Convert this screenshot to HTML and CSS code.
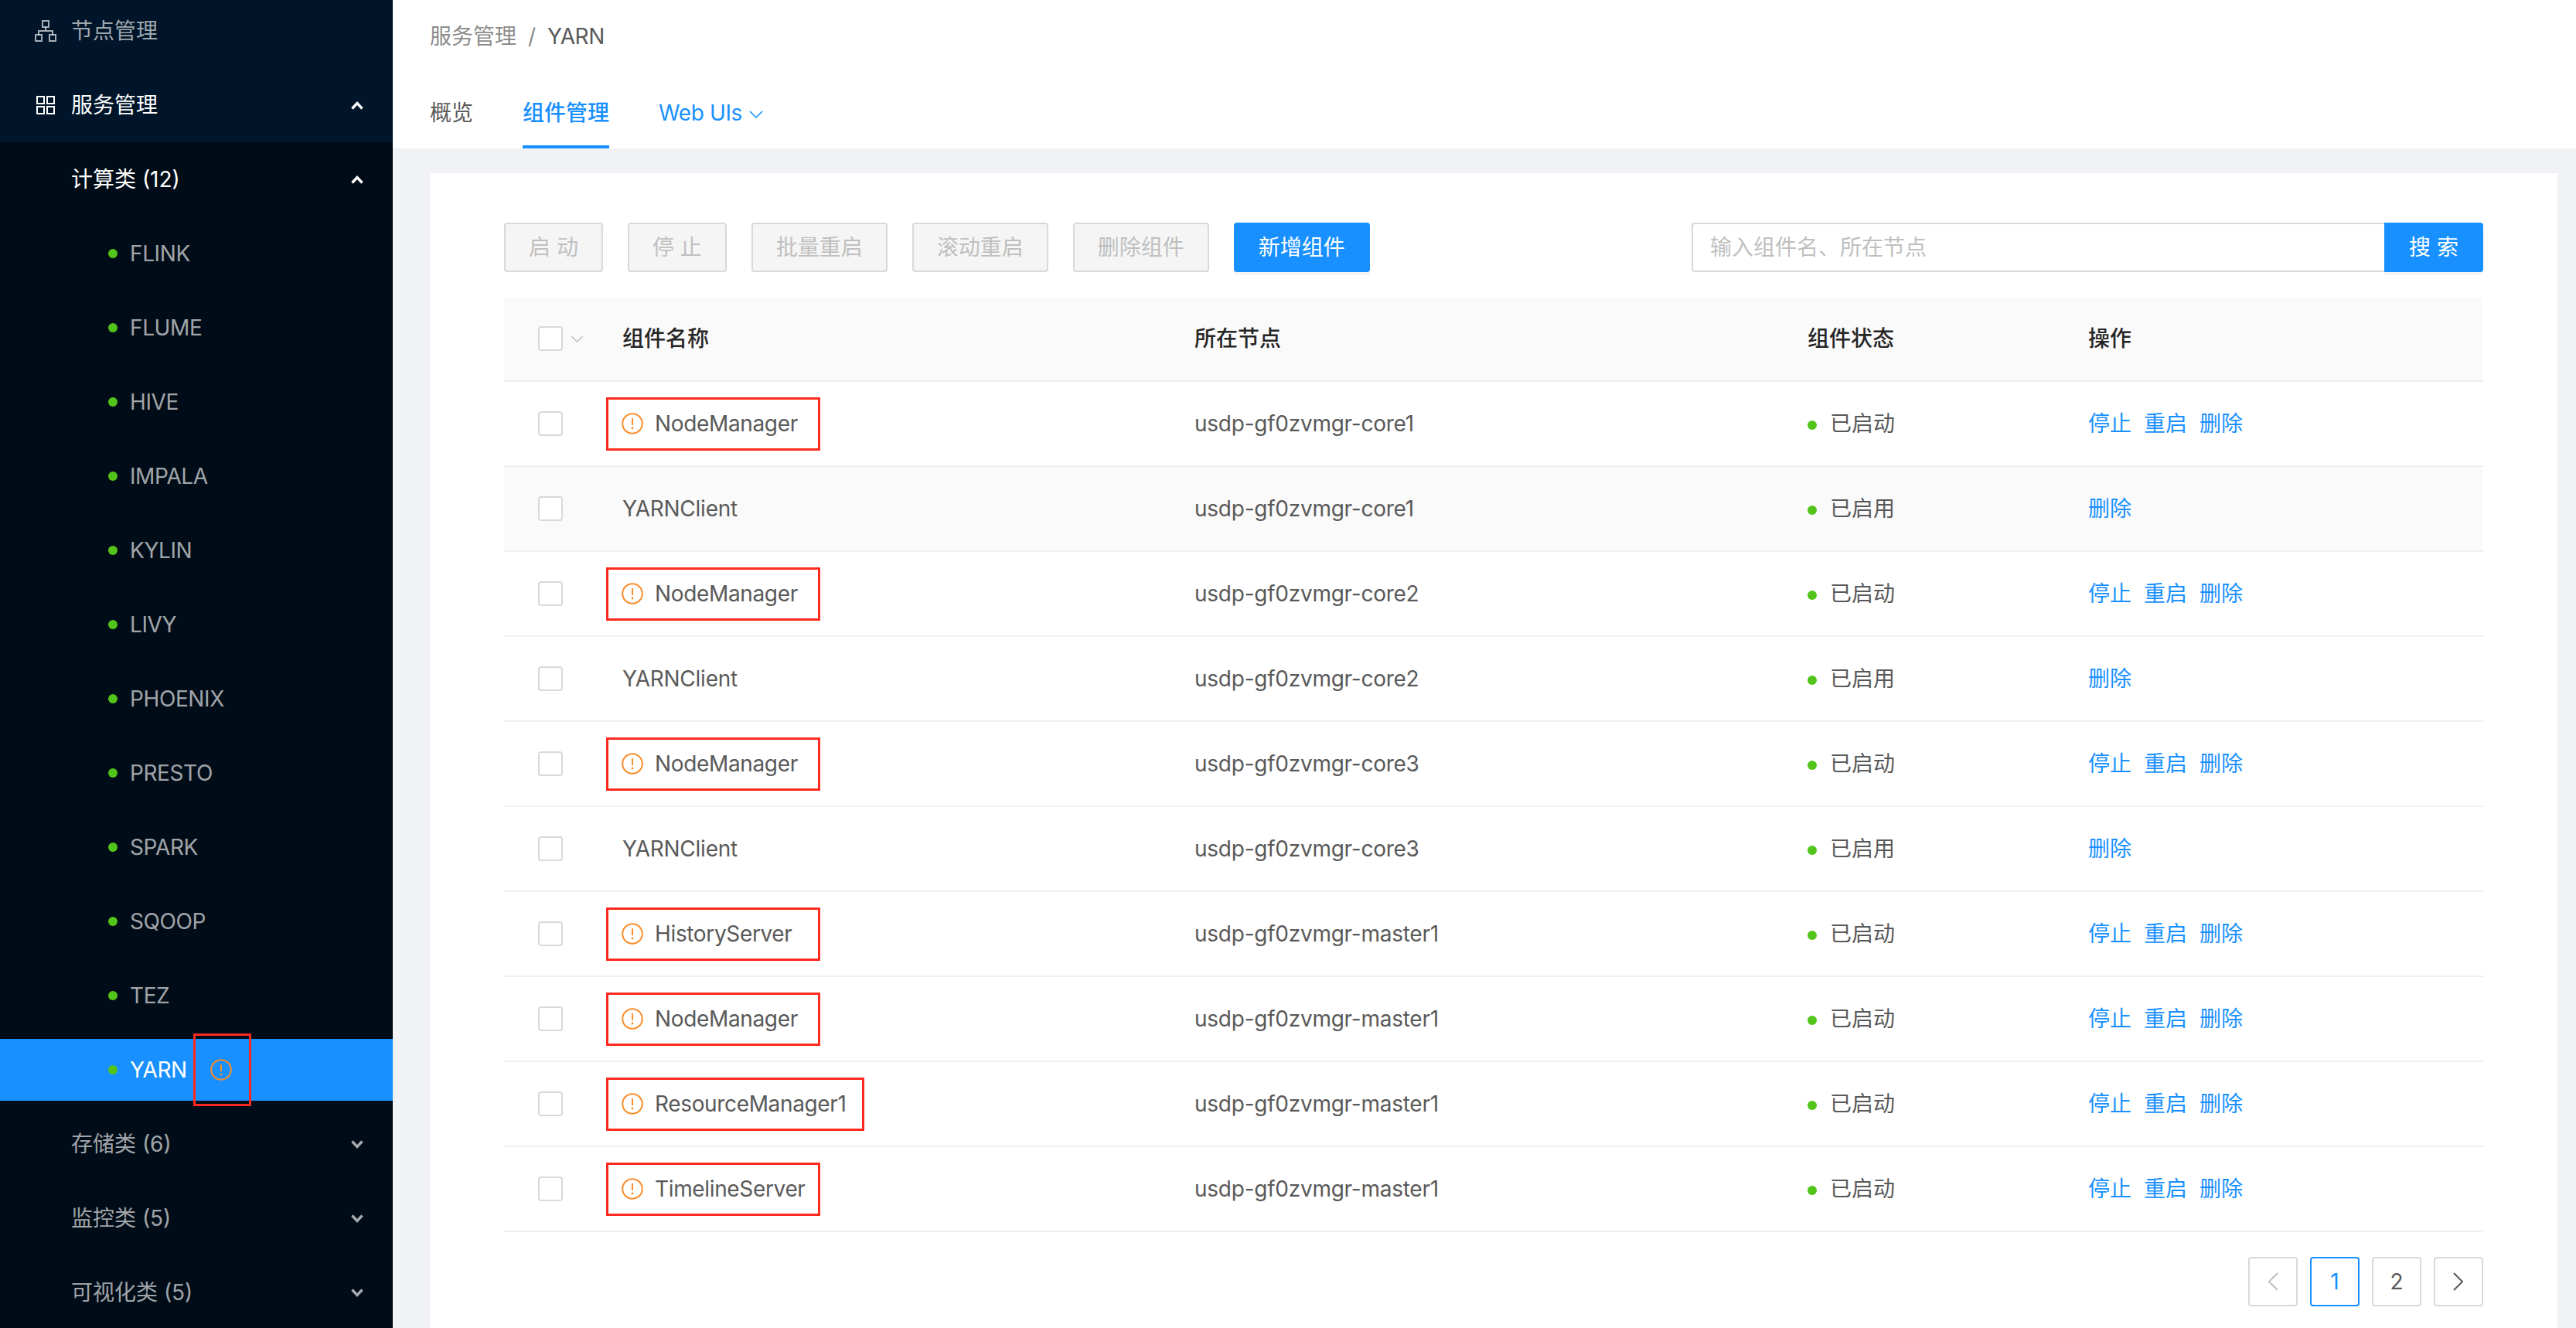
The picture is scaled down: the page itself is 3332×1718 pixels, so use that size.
FILE: index.html
```html
<!DOCTYPE html>
<html lang="zh-CN">
<head>
    <meta charset="UTF-8">
    <title>YARN</title>
    <link rel="stylesheet" href="styles.css">
</head>
<body>

<svg class="defs" width="0" height="0">
    <symbol id="warn" viewBox="0 0 28 28">
        <circle cx="14" cy="14" r="12.8" fill="none" stroke="#fa8c2a" stroke-width="2"/>
        <path d="M14 7v9" fill="none" stroke="#fa8c2a" stroke-width="2"/>
        <circle cx="14" cy="20" r="1.4" fill="#fa8c2a"/>
    </symbol>
    <symbol id="up" viewBox="0 0 16 11">
        <path d="M1.5 9.5 8 2.5l6.500 7" fill="none" stroke="currentColor" stroke-width="3.400"/>
    </symbol>
    <symbol id="down" viewBox="0 0 16 11">
        <path d="M1.500 1.500 8 8.500l6.500-7" fill="none" stroke="currentColor" stroke-width="3.400"/>
    </symbol>
</svg>

<aside class="sider">
    <ul class="menu">
        <li class="menu-item">
            <svg class="menu-icon" viewBox="0 0 28 28" fill="none" stroke="currentColor" stroke-width="2">
                <rect x="10" y="1" width="8" height="8"/>
                <rect x="1" y="19" width="8" height="8"/>
                <rect x="19" y="19" width="8" height="8"/>
                <path d="M14 9v5M5 19v-5h18v5"/>
            </svg>
            <span>节点管理</span>
        </li>
        <li class="menu-item open">
            <svg class="menu-icon" viewBox="0 0 28 28" fill="none" stroke="currentColor" stroke-width="2">
                <rect x="3" y="3" width="9" height="9"/>
                <rect x="16" y="3" width="9" height="9"/>
                <rect x="3" y="16" width="9" height="9"/>
                <rect x="16" y="16" width="9" height="9"/>
            </svg>
            <span>服务管理</span>
            <svg class="arrow"><use href="#up"/></svg>
        </li>
    </ul>
    <ul class="submenu">
        <li class="menu-item group open"><span>计算类 (12)</span><svg class="arrow"><use href="#up"/></svg></li>
        <li class="menu-item leaf"><i class="dot"></i>FLINK</li>
        <li class="menu-item leaf"><i class="dot"></i>FLUME</li>
        <li class="menu-item leaf"><i class="dot"></i>HIVE</li>
        <li class="menu-item leaf"><i class="dot"></i>IMPALA</li>
        <li class="menu-item leaf"><i class="dot"></i>KYLIN</li>
        <li class="menu-item leaf"><i class="dot"></i>LIVY</li>
        <li class="menu-item leaf"><i class="dot"></i>PHOENIX</li>
        <li class="menu-item leaf"><i class="dot"></i>PRESTO</li>
        <li class="menu-item leaf"><i class="dot"></i>SPARK</li>
        <li class="menu-item leaf"><i class="dot"></i>SQOOP</li>
        <li class="menu-item leaf"><i class="dot"></i>TEZ</li>
        <li class="menu-item leaf active">
            <i class="dot"></i>YARN
            <svg class="warn-icon side-warn"><use href="#warn"/></svg>
            <span class="side-mark"></span>
        </li>
        <li class="menu-item group"><span>存储类 (6)</span><svg class="arrow"><use href="#down"/></svg></li>
        <li class="menu-item group"><span>监控类 (5)</span><svg class="arrow"><use href="#down"/></svg></li>
        <li class="menu-item group"><span>可视化类 (5)</span><svg class="arrow"><use href="#down"/></svg></li>
    </ul>
</aside>

<main class="main">
    <header class="page-head">
        <div class="breadcrumb">
            <span>服务管理</span>
            <span class="crumb-sep">/</span>
            <span class="crumb-current">YARN</span>
        </div>
        <nav class="tabs">
            <a class="tab">概览</a>
            <a class="tab current">组件管理</a>
            <a class="tab link">Web UIs
                <svg class="tab-caret" viewBox="0 0 18 10" fill="none" stroke="currentColor" stroke-width="1.600"><path d="M1 1l8 8 8-8"/></svg>
            </a>
        </nav>
    </header>

    <section class="card">
        <div class="toolbar">
            <button class="btn" disabled>启 动</button>
            <button class="btn" disabled>停 止</button>
            <button class="btn" disabled>批量重启</button>
            <button class="btn" disabled>滚动重启</button>
            <button class="btn" disabled>删除组件</button>
            <button class="btn primary">新增组件</button>
            <div class="search">
                <input class="search-input" type="text" placeholder="输入组件名、所在节点">
                <button class="btn primary search-btn">搜 索</button>
            </div>
        </div>

        <table class="grid">
            <colgroup>
                <col class="col-check">
                <col class="col-name">
                <col class="col-node">
                <col class="col-state">
                <col>
            </colgroup>
            <thead>
                <tr>
                    <th class="check-cell">
                        <div class="check-wrap">
                            <span class="check"></span>
                            <svg class="check-caret" viewBox="0 0 18 10" fill="none" stroke="#bfbfbf" stroke-width="1.600"><path d="M1 1l8 8 8-8"/></svg>
                        </div>
                    </th>
                    <th>组件名称</th>
                    <th>所在节点</th>
                    <th>组件状态</th>
                    <th>操作</th>
                </tr>
            </thead>
            <tbody>
                <tr>
                    <td class="check-cell"><div class="check-wrap"><span class="check"></span></div></td>
                    <td class="latin"><div class="flagged"><svg class="warn-icon"><use href="#warn"/></svg>NodeManager</div></td>
                    <td class="latin">usdp-gf0zvmgr-core1</td>
                    <td><i class="dot"></i>已启动</td>
                    <td class="ops"><a>停止</a><a>重启</a><a>删除</a></td>
                </tr>
                <tr class="hover">
                    <td class="check-cell"><div class="check-wrap"><span class="check"></span></div></td>
                    <td class="latin">YARNClient</td>
                    <td class="latin">usdp-gf0zvmgr-core1</td>
                    <td><i class="dot"></i>已启用</td>
                    <td class="ops"><a>删除</a></td>
                </tr>
                <tr>
                    <td class="check-cell"><div class="check-wrap"><span class="check"></span></div></td>
                    <td class="latin"><div class="flagged"><svg class="warn-icon"><use href="#warn"/></svg>NodeManager</div></td>
                    <td class="latin">usdp-gf0zvmgr-core2</td>
                    <td><i class="dot"></i>已启动</td>
                    <td class="ops"><a>停止</a><a>重启</a><a>删除</a></td>
                </tr>
                <tr>
                    <td class="check-cell"><div class="check-wrap"><span class="check"></span></div></td>
                    <td class="latin">YARNClient</td>
                    <td class="latin">usdp-gf0zvmgr-core2</td>
                    <td><i class="dot"></i>已启用</td>
                    <td class="ops"><a>删除</a></td>
                </tr>
                <tr>
                    <td class="check-cell"><div class="check-wrap"><span class="check"></span></div></td>
                    <td class="latin"><div class="flagged"><svg class="warn-icon"><use href="#warn"/></svg>NodeManager</div></td>
                    <td class="latin">usdp-gf0zvmgr-core3</td>
                    <td><i class="dot"></i>已启动</td>
                    <td class="ops"><a>停止</a><a>重启</a><a>删除</a></td>
                </tr>
                <tr>
                    <td class="check-cell"><div class="check-wrap"><span class="check"></span></div></td>
                    <td class="latin">YARNClient</td>
                    <td class="latin">usdp-gf0zvmgr-core3</td>
                    <td><i class="dot"></i>已启用</td>
                    <td class="ops"><a>删除</a></td>
                </tr>
                <tr>
                    <td class="check-cell"><div class="check-wrap"><span class="check"></span></div></td>
                    <td class="latin"><div class="flagged"><svg class="warn-icon"><use href="#warn"/></svg>HistoryServer</div></td>
                    <td class="latin">usdp-gf0zvmgr-master1</td>
                    <td><i class="dot"></i>已启动</td>
                    <td class="ops"><a>停止</a><a>重启</a><a>删除</a></td>
                </tr>
                <tr>
                    <td class="check-cell"><div class="check-wrap"><span class="check"></span></div></td>
                    <td class="latin"><div class="flagged"><svg class="warn-icon"><use href="#warn"/></svg>NodeManager</div></td>
                    <td class="latin">usdp-gf0zvmgr-master1</td>
                    <td><i class="dot"></i>已启动</td>
                    <td class="ops"><a>停止</a><a>重启</a><a>删除</a></td>
                </tr>
                <tr>
                    <td class="check-cell"><div class="check-wrap"><span class="check"></span></div></td>
                    <td class="latin"><div class="flagged wide"><svg class="warn-icon"><use href="#warn"/></svg>ResourceManager1</div></td>
                    <td class="latin">usdp-gf0zvmgr-master1</td>
                    <td><i class="dot"></i>已启动</td>
                    <td class="ops"><a>停止</a><a>重启</a><a>删除</a></td>
                </tr>
                <tr>
                    <td class="check-cell"><div class="check-wrap"><span class="check"></span></div></td>
                    <td class="latin"><div class="flagged"><svg class="warn-icon"><use href="#warn"/></svg>TimelineServer</div></td>
                    <td class="latin">usdp-gf0zvmgr-master1</td>
                    <td><i class="dot"></i>已启动</td>
                    <td class="ops"><a>停止</a><a>重启</a><a>删除</a></td>
                </tr>
            </tbody>
        </table>

        <ul class="pager">
            <li class="page off"><svg class="page-arrow" viewBox="0 0 14 24" fill="none" stroke="currentColor" stroke-width="2"><path d="M13 1 2 12l11 11"/></svg></li>
            <li class="page on">1</li>
            <li class="page">2</li>
            <li class="page"><svg class="page-arrow" viewBox="0 0 14 24" fill="none" stroke="currentColor" stroke-width="2"><path d="M1 1l11 11L1 23"/></svg></li>
        </ul>
    </section>
</main>

</body>
</html>
```

FILE: styles.css
```css
* {
    box-sizing: border-box;
}

html, body {
    height: 100%;
}

body {
    display: flex;
    margin: 0;
    overflow: hidden;
    background: #f0f2f5;
    color: #595959;
    font-family: Inter, "Noto Sans CJK SC", sans-serif;
    font-size: 28px;
    line-height: 44px;
}

ul {
    margin: 0;
    padding: 0;
    list-style: none;
}

.defs {
    position: absolute;
}

/* sidebar */
.sider {
    display: flex;
    flex: none;
    flex-direction: column;
    width: 508px;
    background: #001529;
    color: rgba(255, 255, 255, .65);
}

.menu {
    display: flex;
    flex-direction: column;
    gap: 16px;
    padding-bottom: 8px;
}

.menu-item {
    position: relative;
    display: flex;
    flex: none;
    align-items: center;
    height: 80px;
    padding-left: 45px;
}

.menu-item.open {
    color: #fff;
}

.menu-icon {
    flex: none;
    width: 28px;
    height: 28px;
    margin-right: 19px;
}

.arrow {
    position: absolute;
    top: 35px;
    left: 454px;
    width: 16px;
    height: 11px;
}

.submenu {
    display: flex;
    flex: 1;
    flex-direction: column;
    gap: 16px;
    min-height: 0;
    padding-top: 8px;
    background: #000c17;
}

.menu-item.group {
    padding-left: 92px;
}

.menu-item.leaf {
    padding-left: 140px;
    letter-spacing: -.4px;
}

.leaf .dot {
    margin-right: 16px;
}

.active {
    background: #1890ff;
    color: #fff;
}

.side-warn {
    margin-left: 30px;
}

.side-mark {
    position: absolute;
    top: -7px;
    left: 250px;
    width: 75px;
    height: 94px;
    border: 3px solid #ff2a1f;
}

.dot {
    display: inline-block;
    flex: none;
    width: 12px;
    height: 12px;
    margin-right: 17px;
    border-radius: 50%;
    background: #52c41a;
    vertical-align: 2px;
}

.warn-icon {
    flex: none;
    width: 28px;
    height: 28px;
}

/* header */
.main {
    display: flex;
    flex: 1;
    flex-direction: column;
    min-width: 0;
}

.page-head {
    flex: none;
    height: 192px;
    padding: 25px 48px 0;
    background: #fff;
}

.breadcrumb {
    display: flex;
    gap: 15px;
    color: #8c8c8c;
}

.crumb-current {
    color: #595959;
    letter-spacing: -.4px;
}

.tabs {
    display: flex;
    gap: 64px;
    margin-top: 55px;
}

.tab {
    height: 68px;
    border-bottom: 4px solid transparent;
}

.tab.current {
    border-color: #1890ff;
    color: #1890ff;
    font-weight: 500;
}

.tab.link {
    color: #1890ff;
    letter-spacing: -.4px;
}

.tab-caret {
    width: 18px;
    height: 10px;
    margin-left: 2px;
    vertical-align: 3px;
}

/* content */
.card {
    flex: 1;
    margin: 32px 24px 0 48px;
    padding: 64px 96px 0;
    background: #fff;
}

.toolbar {
    display: flex;
    gap: 32px;
    margin-bottom: 32px;
}

.btn {
    height: 64px;
    padding: 0 30px;
    border: 2px solid #d9d9d9;
    border-radius: 4px;
    background: #f5f5f5;
    color: #bfbfbf;
    font: inherit;
}

.btn.primary {
    border-color: #1890ff;
    background: #1890ff;
    box-shadow: 0 4px 0 rgba(0, 0, 0, .045);
    color: #fff;
}

.search {
    display: flex;
    width: 1024px;
    margin-left: auto;
}

.search-input {
    flex: 1;
    min-width: 0;
    height: 64px;
    padding: 0 22px;
    border: 2px solid #d9d9d9;
    border-right: 0;
    border-radius: 4px 0 0 4px;
    color: #595959;
    font: inherit;
}

.search-input::placeholder {
    color: #bfbfbf;
}

.search-btn {
    width: 128px;
    border-radius: 0 4px 4px 0;
}

.grid {
    width: 100%;
    border-spacing: 0;
    table-layout: fixed;
}

.col-check {
    width: 121px;
}

.col-name {
    width: 740px;
}

.col-node {
    width: 793px;
}

.col-state {
    width: 363px;
}

.grid th,
.grid td {
    height: 110px;
    padding: 0 32px;
    border-bottom: 2px solid #f0f0f0;
    text-align: left;
}

.grid th {
    background: #fafafa;
    color: #262626;
    font-weight: 500;
}

.grid th:first-child {
    border-radius: 4px 0 0 0;
}

.grid th:last-child {
    border-radius: 0 4px 0 0;
}

.grid .check-cell {
    padding: 0 0 0 44px;
}

.grid .latin {
    letter-spacing: -.25px;
}

.hover td {
    background: #fafafa;
}

.check-wrap {
    display: flex;
    align-items: center;
}

.check {
    display: block;
    width: 32px;
    height: 32px;
    border: 2px solid #d9d9d9;
    border-radius: 4px;
    background: #fff;
}

.check-caret {
    width: 17px;
    height: 9px;
    margin-left: 10px;
}

.flagged {
    display: flex;
    align-items: center;
    gap: 15px;
    width: 277px;
    height: 69px;
    margin-left: -21px;
    padding-left: 17px;
    border: 3px solid #ff2a1f;
    letter-spacing: -.35px;
}

.flagged.wide {
    width: 334px;
}

.ops a {
    margin-right: 16px;
    color: #1890ff;
}

/* pagination */
.pager {
    display: flex;
    justify-content: flex-end;
    gap: 16px;
    margin-top: 32px;
}

.page {
    display: flex;
    align-items: center;
    justify-content: center;
    width: 64px;
    height: 64px;
    border: 2px solid #d9d9d9;
    border-radius: 4px;
}

.page.on {
    border-color: #1890ff;
    color: #1890ff;
}

.page.off {
    color: #bfbfbf;
}

.page-arrow {
    width: 14px;
    height: 24px;
}
```
